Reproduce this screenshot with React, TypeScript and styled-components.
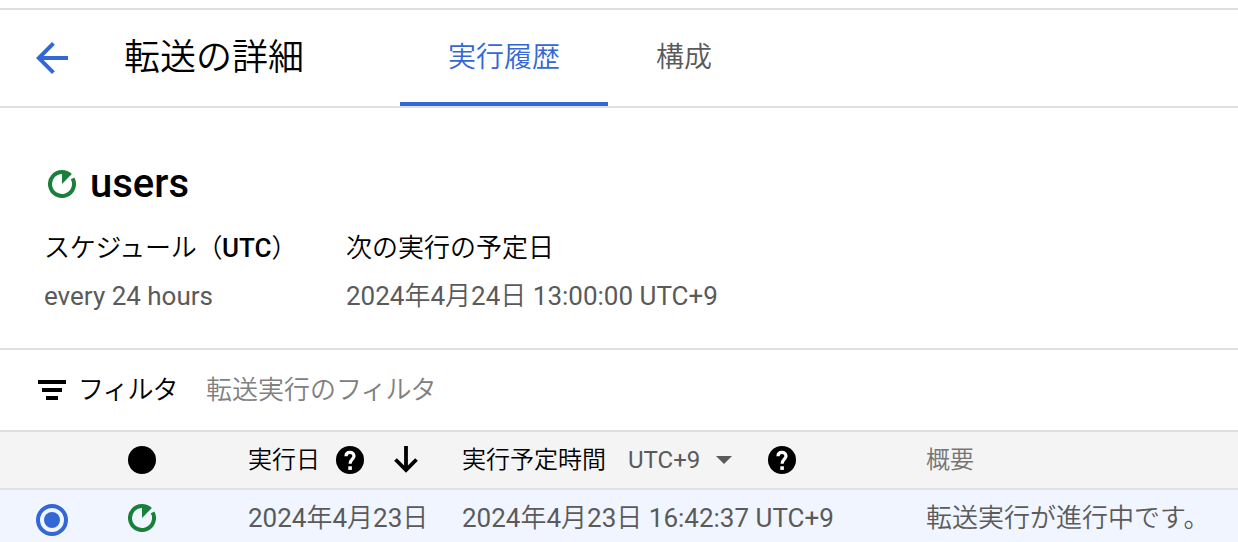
import { PropsWithChildren } from 'react';
import styled, { createGlobalStyle, ThemeProvider } from 'styled-components';

const theme = {
	colors: {
		blue: '#3367d6',
		green: '#188038',
		black: '#000000',
		grey: '#5a5a5a',
		placeholder: '#808080',
		border: '#e0e0e0',
		headRow: '#f4f4f4',
		selectedRow: '#f0f5ff',
	},
	font: `Roboto, 'Noto Sans CJK JP', sans-serif`,
	kanaWeight: 350,
};

const GlobalStyle = createGlobalStyle`
	* {
		box-sizing: border-box;
	}

	body {
		margin: 0;
		background-color: #ffffff;
		overflow: hidden;
	}

	h1, h2, p {
		margin: 0;
	}

	svg {
		display: block;
		flex-shrink: 0;
	}
`;

const StyledPage = styled.main`
	height: 542px;
	padding-top: 8px;
	overflow: hidden;
	font-family: ${({ theme }) => theme.font};
	font-size: 26px;
	line-height: 40px;
	white-space: nowrap;
	color: ${({ theme }) => theme.colors.black};
`;

const StyledHeader = styled.header`
	display: flex;
	height: 100px;
	padding-left: 36px;
	border-top: 2px solid ${({ theme }) => theme.colors.border};
	border-bottom: 2px solid ${({ theme }) => theme.colors.border};
`;

const StyledBack = styled.button`
	display: flex;
	align-items: center;
	width: 88px;
	padding: 0;
	border: 0;
	background: none;
	color: ${({ theme }) => theme.colors.blue};
`;

const StyledTitle = styled.h1`
	width: 276px;
	font-size: 36px;
	font-weight: ${({ theme }) => theme.kanaWeight};
	line-height: 96px;
`;

const StyledTab = styled.button<{ $active?: boolean }>`
	height: 96px;
	padding: 4px 48px 0;
	border: 0;
	border-bottom: 4px solid ${({ theme, $active }) => ($active ? theme.colors.blue : 'transparent')};
	background: none;
	font-family: inherit;
	font-size: 28px;
	font-weight: ${({ theme }) => theme.kanaWeight};
	line-height: 88px;
	color: ${({ theme, $active }) => ($active ? theme.colors.blue : theme.colors.grey)};
`;

const StyledDetails = styled.section`
	height: 242px;
	padding: 52px 44px 0;
	border-bottom: 2px solid ${({ theme }) => theme.colors.border};
`;

const StyledName = styled.div`
	display: flex;
	align-items: center;
	gap: 14px;
	height: 48px;
	padding-left: 4px;

	h2 {
		font-size: 40px;
		font-weight: 500;
		line-height: 48px;
	}
`;

const StyledParams = styled.div`
	display: grid;
	grid-template-columns: 302px 1fr;
	row-gap: 8px;
	padding-top: 20px;
`;

const StyledText = styled.p<{ $muted?: boolean; $light?: boolean }>`
	font-weight: ${({ theme, $light }) => ($light ? theme.kanaWeight : 400)};
	color: ${({ theme, $muted }) => ($muted ? theme.colors.grey : theme.colors.black)};

	b {
		font-weight: 500;
		letter-spacing: 0;
	}

	i {
		font-style: normal;
		font-weight: ${({ theme }) => theme.kanaWeight};
	}
`;

const StyledKana = styled.span<{ $spacing: number }>`
	letter-spacing: ${({ $spacing }) => $spacing}px;
`;

const StyledFilter = styled.div`
	display: flex;
	align-items: center;
	height: 82px;
	padding: 0 38px;
	border-bottom: 2px solid ${({ theme }) => theme.colors.border};
	font-weight: ${({ theme }) => theme.kanaWeight};

	.filter__label {
		width: 128px;
		margin-left: 12px;
	}

	.filter__placeholder {
		color: ${({ theme }) => theme.colors.placeholder};
	}
`;

const StyledRow = styled.div<{ $head?: boolean }>`
	display: grid;
	grid-template-columns: 92px 120px 214px 464px 1fr;
	align-items: center;
	height: ${({ $head }) => ($head ? 58 : 56)}px;
	padding-left: 36px;
	border-bottom: ${({ $head }) => ($head ? '2px solid #e0e0e0' : 0)};
	background-color: ${({ theme, $head }) => ($head ? theme.colors.headRow : theme.colors.selectedRow)};
	font-size: ${({ $head }) => ($head ? 24 : 26)}px;
`;

const StyledHeadCell = styled.div`
	display: flex;
	align-items: center;
	font-weight: ${({ theme }) => theme.kanaWeight};

	.head-cell__help {
		margin-left: 16px;
	}

	.head-cell__sort {
		margin-left: 30px;
	}

	.head-cell__zone {
		margin-left: 22px;
		font-weight: 400;
		color: ${({ theme }) => theme.colors.grey};
	}

	.head-cell__caret {
		margin: 0 20px 0 16px;
	}
`;

const StyledMutedCell = styled(StyledHeadCell)`
	color: #757575;
`;

const BackIcon = () => (
	<svg width='32' height='32' viewBox='4 4 16 16' fill='currentColor'>
		<path d='M20 11H7.83l5.59-5.59L12 4l-8 8 8 8 1.41-1.41L7.83 13H20v-2z' />
	</svg>
);

const RunningIcon = () => (
	<svg width='28' height='28' viewBox='0 0 28 28'>
		<path d='M24.6 8.4A12 12 0 1 1 14 2' fill='none' stroke={theme.colors.green} strokeWidth='4' />
		<path d='M14 0A14 14 0 0 1 23.8 4.1L14 14Z' fill={theme.colors.green} />
	</svg>
);

const FilterIcon = () => (
	<svg width='28' height='20' viewBox='0 0 28 20'>
		<path d='M0 0H28V4H0ZM4 8H24V12H4ZM8 16H20V20H8Z' />
	</svg>
);

const HelpIcon = ({ className }: { className?: string }) => (
	<svg className={className} width='28' height='28' viewBox='0 0 28 28' fill='none'>
		<circle cx='14' cy='14' r='14' fill='#000000' />
		<path
			d='M10 10.3C10 7.8 11.6 6.4 14 6.4S18 7.9 18 10C18 13 14.1 13.3 14.1 17.8'
			stroke='#ffffff'
			strokeWidth='3.2'
		/>
		<rect x='12.3' y='20.3' width='3.6' height='3.6' fill='#ffffff' />
	</svg>
);

const SortIcon = () => (
	<svg className='head-cell__sort' width='24' height='28' viewBox='0 0 24 28' fill='none'>
		<path d='M12 0V24M1.5 13.5L12 24L22.5 13.5' stroke='#000000' strokeWidth='3.8' />
	</svg>
);

const CaretIcon = () => (
	<svg className='head-cell__caret' width='16' height='8' viewBox='0 0 16 8'>
		<path d='M0 0H16L8 8Z' fill={theme.colors.grey} />
	</svg>
);

const StatusDot = () => (
	<svg width='28' height='28' viewBox='0 0 28 28'>
		<circle cx='14' cy='14' r='14' />
	</svg>
);

const StyledRadio = styled.span`
	display: flex;
	align-items: center;
	justify-content: center;
	width: 32px;
	height: 32px;
	margin-top: 4px;
	border: 4px solid ${({ theme }) => theme.colors.blue};
	border-radius: 50%;

	&::after {
		content: '';
		width: 16px;
		height: 16px;
		border-radius: 50%;
		background-color: ${({ theme }) => theme.colors.blue};
	}
`;

const DateText: React.FC<PropsWithChildren<{ year: string; month: string; day: string }>> = ({
	year,
	month,
	day,
	children,
}) => (
	<StyledText $muted>
		{year}
		<i>年</i>
		{month}
		<i>月</i>
		{day}
		<i>日</i>
		{children}
	</StyledText>
);

export default function App() {
	return (
		<ThemeProvider theme={theme}>
			<GlobalStyle />
			<StyledPage lang='ja'>
				<StyledHeader>
					<StyledBack aria-label='戻る'>
						<BackIcon />
					</StyledBack>
					<StyledTitle>転送の詳細</StyledTitle>
					<StyledTab $active>実行履歴</StyledTab>
					<StyledTab>構成</StyledTab>
				</StyledHeader>

				<StyledDetails>
					<StyledName>
						<RunningIcon />
						<h2>users</h2>
					</StyledName>
					<StyledParams>
						<StyledText $light>
							<StyledKana $spacing={-0.3}>スケジュール（</StyledKana>
							<b>UTC</b>）
						</StyledText>
						<StyledText $light>次の実行の予定日</StyledText>
						<StyledText $muted>every 24 hours</StyledText>
						<DateText year='2024' month='4' day='24'>
							{' 13:00:00 UTC+9'}
						</DateText>
					</StyledParams>
				</StyledDetails>

				<StyledFilter>
					<FilterIcon />
					<span className='filter__label'>
						<StyledKana $spacing={-1}>フィルタ</StyledKana>
					</span>
					<span className='filter__placeholder'>
						転送実行の<StyledKana $spacing={-1}>フィルタ</StyledKana>
					</span>
				</StyledFilter>

				<StyledRow $head>
					<span />
					<StatusDot />
					<StyledHeadCell>
						実行日
						<HelpIcon className='head-cell__help' />
						<SortIcon />
					</StyledHeadCell>
					<StyledHeadCell>
						実行予定時間
						<span className='head-cell__zone'>UTC+9</span>
						<CaretIcon />
						<HelpIcon className='head-cell__help' />
					</StyledHeadCell>
					<StyledMutedCell>概要</StyledMutedCell>
				</StyledRow>

				<StyledRow>
					<StyledRadio />
					<RunningIcon />
					<DateText year='2024' month='4' day='23' />
					<DateText year='2024' month='4' day='23'>
						{' 16:42:37 UTC+9'}
					</DateText>
					<StyledText $muted $light>
						転送実行が進行中です。
					</StyledText>
				</StyledRow>
			</StyledPage>
		</ThemeProvider>
	);
}
